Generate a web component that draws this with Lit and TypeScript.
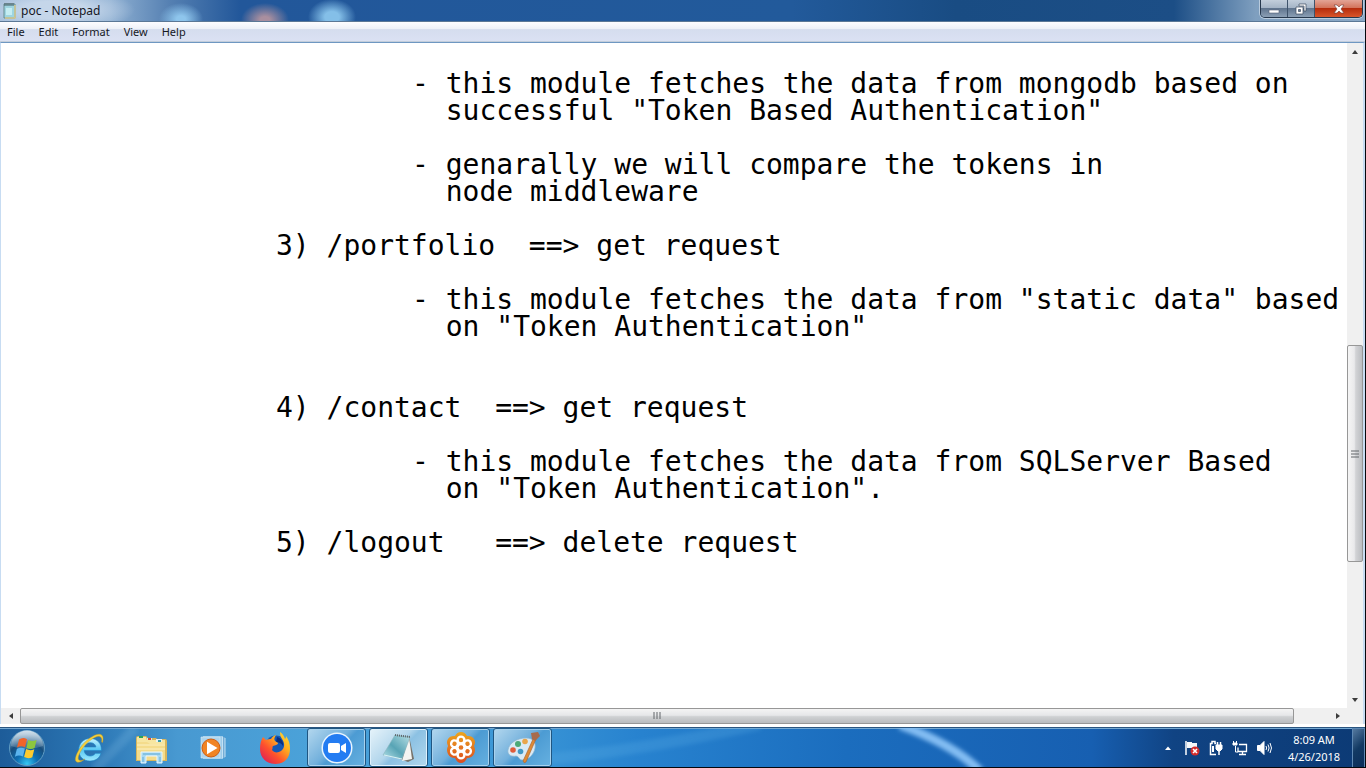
import { LitElement, html, svg, css } from "lit";
import { customElement, state } from "lit/decorators.js";

const DOCUMENT_TEXT = [
  "",
  "\t\t\t- this module fetches the data from mongodb based on",
  "\t\t\t  successful \"Token Based Authentication\"",
  "",
  "\t\t\t- genarally we will compare the tokens in",
  "\t\t\t  node middleware",
  "",
  "\t\t3) /portfolio  ==> get request",
  "",
  "\t\t\t- this module fetches the data from \"static data\" based",
  "\t\t\t  on \"Token Authentication\"",
  "",
  "",
  "\t\t4) /contact  ==> get request",
  "",
  "\t\t\t- this module fetches the data from SQLServer Based",
  "\t\t\t  on \"Token Authentication\".",
  "",
  "\t\t5) /logout   ==> delete request",
].join("\n");

const MENUS = ["File", "Edit", "Format", "View", "Help"];

const startOrb = html`<svg width="38" height="38" viewBox="0 0 38 38" aria-hidden="true">
  <defs>
    <radialGradient id="orb" cx=".5" cy=".95" r=".85">
      <stop offset="0" stop-color="#35c8f4"/><stop offset=".35" stop-color="#0d6fb4"/>
      <stop offset=".7" stop-color="#174d7c"/><stop offset="1" stop-color="#7fa3bf"/>
    </radialGradient>
    <linearGradient id="gloss" x1="0" y1="0" x2="0" y2="1">
      <stop offset="0" stop-color="#e4eef5" stop-opacity=".85"/><stop offset="1" stop-color="#8fb0c8" stop-opacity=".25"/>
    </linearGradient>
  </defs>
  <circle cx="19" cy="19" r="17.5" fill="url(#orb)" stroke="#5f9cc4" stroke-width="1"/>
  <path d="M3 17a16 15.500 0 0 1 32 0q-16 6-32 0z" fill="url(#gloss)"/>
  <path d="M11 10.500q4-3 8-.2l-2 8q-4-2-8 .2z" fill="#f0642a"/>
  <path d="M20.200 10.900q4 2 8.400 0l-2 8.200q-4 1.800-8.200-.2z" fill="#8cc63f"/>
  <path d="M8.900 19.700q4-2 8-.1l-2 8q-4-2-8 .1z" fill="#5bb4ee"/>
  <path d="M18.100 20.100q4 2.100 8.200.2l-2 8q-4 1.900-8.200-.2z" fill="#fccb2f"/>
</svg>`;

const ieIcon = html`<svg width="32" height="32" viewBox="0 0 32 32" aria-hidden="true">
  <defs><linearGradient id="ie" x1="0" y1="0" x2="0" y2="1">
    <stop offset="0" stop-color="#c6f4ff"/><stop offset=".5" stop-color="#57c7f4"/><stop offset="1" stop-color="#9ee9ff"/>
  </linearGradient></defs>
  <path d="M28.500 18.600H11.200c.3 3.300 2.600 5.400 5.800 5.400 2.500 0 4.300-1 5.300-2.700h5.700c-1.500 5-5.700 7.700-11 7.700C10.400 29 5.700 24.600 5.700 18S10.500 6.500 17.200 6.500c7 0 11.500 4.700 11.300 12.100zM11.400 15h11.500c-.4-2.700-2.600-4.300-5.600-4.300-3.100 0-5.300 1.700-5.900 4.300z" fill="url(#ie)" stroke="#1d82c3" stroke-width=".6"/>
  <path d="M29.500 10.500c1.300-4.300.6-7.500-2.300-8.200C22.300 1.200 12.500 7.800 7 16.200 2.500 22.900 1 28.600 3.800 30c1.900 1 5-.4 8.200-3-2.800 1.600-5 2-6 1.100-1.900-1.700-.1-6.600 4-12.300C15 9 23 3.500 26.600 4.400c2 .5 2.700 2.700 2 5.700z" fill="#f4cf3c" stroke="#c79a18" stroke-width=".4"/>
</svg>`;

const explorerIcon = html`<svg width="34" height="32" viewBox="0 0 34 32" aria-hidden="true">
  <path d="M2 6q0-2 2-2h8l2 2h8l1 1h8q2 0 2 2v20H2z" fill="#d8b65c"/>
  <path d="M3 5h9l1 3h18v20H3z" fill="#f7e6a1"/>
  <path d="M5 4h4v2H5z" fill="#2aa35b"/><path d="M13 6h5v2h-5z" fill="#d7e4ef"/><path d="M14 6h3v2h-3z" fill="#df4b2d"/>
  <path d="M22 7h6v3h-6z" fill="#e6f1f5"/><path d="M24 8h3v2h-3z" fill="#3a9ca8"/>
  <path d="M3 10h10l3 2h15v16H3z" fill="#f4dc8c"/><path d="M3 13h28M3 17h28" stroke="#fdf2c5"/>
  <path d="M7 31V20h21v11h-5v-7H12v7z" fill="#a7d8f1" stroke="#e8f8ff"/>
  <path d="M9 22h17M9 25v5M26 25v5" stroke="#65add5" stroke-width="1"/>
</svg>`;

const mediaIcon = html`<svg width="28" height="28" viewBox="0 0 28 28" aria-hidden="true">
  <path d="M6 3h20v21H6z" fill="#74acd5"/><path d="M4 2h20v23H4z" fill="#9ccbea"/>
  <path d="M2 3h19v21H2z" fill="#add4ed" stroke="#d6ecf8" stroke-width=".6"/><path d="M23.500 3v21M26 4v19" stroke="#c3e2f5"/>
  <circle cx="12" cy="14" r="9" fill="#f18423" stroke="#cf5e12"/>
  <path d="M8 7.700v12.600L18.500 14z" fill="#fff"/>
</svg>`;

const firefoxIcon = html`<svg width="32" height="34" viewBox="0 0 32 34" aria-hidden="true">
  <defs><linearGradient id="fox" x1="1" y1="0" x2=".1" y2="1">
    <stop offset="0" stop-color="#ffe43b"/><stop offset=".35" stop-color="#ffad1f"/>
    <stop offset=".65" stop-color="#ff512d"/><stop offset="1" stop-color="#d9195b"/>
  </linearGradient></defs>
  <circle cx="17" cy="15.500" r="11" fill="#1658b5"/>
  <path d="M18 6c4 1 7 5 6 9-2-3-4-4-7-4z" fill="#0b2f7d"/>
  <path d="M4 6c1 1 2 2 3 3 2-1 4-1 5-1 1-2 2-3 5-4-2 3-2 4-1 6l3 2c0 2-3 2-5 3-1 1 0 2-1 4 2 3 6 3 9 1 4-3 4-8 1-12-2-3-2-5-2-7 3 2 4 4 5 7 1-1 1-2 1-3 3 4 4 8 4 13 0 9-6 15-14.500 15S1 27 1 18c0-5 1-9 3-12z" fill="url(#fox)"/>
</svg>`;

const zoomIcon = html`<svg width="32" height="32" viewBox="0 0 32 32" aria-hidden="true">
  <circle cx="16" cy="16" r="15.500" fill="#e9f5ff"/><circle cx="16" cy="16" r="14" fill="#237cf2"/>
  <rect x="7" y="11" width="12" height="10" rx="2" fill="#fff"/><path d="M20 14l5-3v10l-5-3z" fill="#fff"/>
</svg>`;

const notepadLarge = html`<svg width="34" height="32" viewBox="0 0 34 32" aria-hidden="true">
  <defs><linearGradient id="pad" x1="0" y1="1" x2="1" y2="0">
    <stop offset="0" stop-color="#b4e1e9"/><stop offset=".45" stop-color="#58a4b5"/><stop offset="1" stop-color="#b7dfe5"/>
  </linearGradient></defs>
  <path d="M27 4l5 23-6 3-8-3z" fill="#77736b"/>
  <path d="M27 5l3 22-10 2z" fill="#f4f5f2"/>
  <path d="M13 3l15 2-8 22-19-4z" fill="url(#pad)" stroke="#8fb7bf" stroke-width=".6"/>
  <path d="M13 3l15 2" stroke="#5e6467" stroke-width="2" stroke-dasharray="1 1"/>
  <path d="M2 23l18 4" stroke="#d9f3f6"/>
</svg>`;

const petals = [0, 60, 120, 180, 240, 300];
const flowerIcon = html`<svg width="34" height="34" viewBox="0 0 34 34" aria-hidden="true">
  <defs><linearGradient id="daisy" gradientUnits="userSpaceOnUse" x1="0" y1="2" x2="0" y2="32">
    <stop offset="0" stop-color="#eba31d"/><stop offset="1" stop-color="#dc4b20"/>
  </linearGradient></defs>
  <path d="M17 1q4 0 6 4 5-.5 7 3 2 3 0 7 2 4 0 8-2 4-7 4-2 5-6 5t-6-5q-5 0-7-4-2-4 0-8-2-4 0-7 2-3.500 7-3 2-4 6-4z" fill="url(#daisy)"/>
  ${petals.map((a) => svg`<circle cx="17" cy="9" r="3.400" fill="none" stroke="#fff" stroke-width="2.400" transform="rotate(${a} 17 16.500)"/>`)}
  <circle cx="17" cy="16.500" r="4.500" fill="#fff"/><circle cx="17" cy="16.500" r="2.300" fill="#e47622"/>
</svg>`;

const paintIcon = html`<svg width="34" height="34" viewBox="0 0 34 34" aria-hidden="true">
  <path d="M2 19C3 12 11 7 20 7c7 0 10 4 9 10-1 7-7 12-13 12-3 0-3-4-6-4-4 1-9-1-8-6z" fill="#d9eaf5" stroke="#8fb6d0" stroke-width=".7"/>
  <circle cx="12" cy="13" r="3" fill="#4ca977"/><circle cx="19" cy="10.500" r="2.800" fill="#e9a64b"/>
  <circle cx="7" cy="19" r="2.800" fill="#df5c3c"/><circle cx="14.500" cy="20.500" r="2.800" fill="#4298c5"/>
  <path d="M28 6l2 2-10 23q-2 2-3-1z" fill="#de8a35" stroke="#a8602b" stroke-width=".6"/>
  <path d="M25 2l7-1 2 4-5 5-3-2z" fill="#a86b4c"/>
</svg>`;

const TASKS = [
  { label: "Internet Explorer", icon: ieIcon, open: false, active: false },
  { label: "Windows Explorer", icon: explorerIcon, open: false, active: false },
  { label: "Media Player", icon: mediaIcon, open: false, active: false },
  { label: "Firefox", icon: firefoxIcon, open: false, active: false },
  { label: "Zoom", icon: zoomIcon, open: true, active: false },
  { label: "Notepad", icon: notepadLarge, open: true, active: true },
  { label: "GoToWebinar", icon: flowerIcon, open: true, active: false },
  { label: "Paint", icon: paintIcon, open: true, active: false },
];

const TRAY = [
  { label: "Show hidden icons", icon: html`<svg width="16" height="16" viewBox="0 0 16 16"><path d="M5 10l3-3.500 3 3.500z" fill="#fff"/></svg>` },
  { label: "Action Center", icon: html`<svg width="16" height="16" viewBox="0 0 16 16"><path d="M2 1v14" stroke="#fff" stroke-width="1.500"/><path d="M3 2h5v1h5v6H8V8H3z" fill="#f4f7fa"/><circle cx="11" cy="11" r="4.500" fill="#d32c2c"/><path d="M9 9l4 4M13 9l-4 4" stroke="#fff" stroke-width="1.600"/></svg>` },
  { label: "Power", icon: html`<svg width="16" height="16" viewBox="0 0 16 16" fill="none" stroke="#fff"><path d="M8 14.500H2.500v-11H4v-2h3v2h1" stroke-width="1.500"/><path d="M5 6v6" stroke-width="2"/><path d="M9.500 2v3M12.500 2v3" stroke-width="1.500"/><path d="M8 5h6v4l-2 2h-2L8 9z" fill="#fff"/><path d="M11 11v4" stroke-width="1.500"/></svg>` },
  { label: "Network", icon: html`<svg width="16" height="16" viewBox="0 0 16 16" fill="none" stroke="#fff"><path d="M1.500 1v2M4.500 1v2"/><path d="M1 3h4v2H1z" fill="#fff"/><path d="M3.500 6v6H6"/><path d="M7 4.500h7.500v7H6v-4" stroke-width="1.300"/><path d="M10.500 12v2M7 14.500h7" stroke-width="1.300"/></svg>` },
  { label: "Volume", icon: html`<svg width="16" height="16" viewBox="0 0 16 16" fill="none" stroke="#fff"><path d="M1.500 5.500H4l4-4v13l-4-4H1.500z" fill="#fff"/><path d="M10 6q1.200 2 0 4M12 4.500q2.200 3.500 0 7M14 3q3 5 0 10"/></svg>` },
];

const arrow = (d: string) => html`<svg width="8" height="8" viewBox="0 0 8 8" aria-hidden="true"><path d=${d} fill="#3c3c3c"/></svg>`;

@customElement("app-root")
export class AppRoot extends LitElement {
  @state() private text = DOCUMENT_TEXT;

  static styles = css`
    :host {
      display: flex;
      flex-direction: column;
      height: 100vh;
      box-sizing: border-box;
      border-right: 1px solid #05070c;
      border-bottom: 1px solid #05070c;
      overflow: hidden;
      font-family: "Noto Sans", "Open Sans", sans-serif;
      font-size: 11px;
      color: #15181f;
    }
    button {
      display: flex;
      align-items: center;
      justify-content: center;
      padding: 0;
      border: 0;
      background: none;
      font: inherit;
      color: inherit;
    }
    svg { display: block; flex: none; }
    .window {
      flex: 1;
      min-height: 0;
      display: flex;
      flex-direction: column;
    }
    .title {
      height: 21px;
      flex: none;
      display: flex;
      align-items: flex-start;
      padding: 0 2px;
      border-bottom: 1px solid #5b7896;
      background:
        radial-gradient(ellipse 22px 16px at 181px 19px, #8ec5ec 20%, transparent),
        radial-gradient(ellipse 24px 17px at 265px 20px, #a98f9f 20%, transparent),
        radial-gradient(ellipse 24px 18px at 332px 17px, #84bfe8 30%, transparent),
        radial-gradient(ellipse 80px 22px at 55px 10px, #c5d6ea 40%, transparent),
        linear-gradient(90deg, #9db8d6 0, #8fb0d2 110px, #5580b2 170px, #22579a 240px, #225a9b 58%, #194c83 70%, #1c4e86 86%, #7f9fbf 92%, #8ba9c7 100%);
    }
    .caption {
      display: flex;
      align-items: center;
      gap: 4px;
      height: 21px;
      flex: 1;
      margin: 0;
      font-size: 12px;
      font-weight: 400;
    }
    .controls {
      display: flex;
      height: 17px;
      border: 1px solid #26384d;
      border-top: 0;
      border-radius: 0 0 5px 5px;
      overflow: hidden;
      box-shadow: 0 0 0 1px #b9cbdd;
    }
    .control {
      width: 27px;
      height: 17px;
      border-right: 1px solid #3e536b;
      background: linear-gradient(#c2cedb 0, #a3b3c5 48%, #60758e 50%, #8b9fb5 100%);
    }
    .close {
      width: 47px;
      border-right: 0;
      background: linear-gradient(#e3a495 0, #d27158 48%, #b62d0d 50%, #d9552a 100%);
    }
    .menu {
      height: 19px;
      flex: none;
      display: flex;
      align-items: center;
      gap: 14px;
      padding: 0 7px;
      border-bottom: 1px solid #c3cedb;
      background: linear-gradient(#fdfdff 0, #edf1f8 35%, #d5ddee 40%, #dbe1f3 100%);
    }
    .body {
      flex: 1;
      min-height: 0;
      display: grid;
      grid-template-columns: minmax(0, 1fr) 16px;
      grid-template-rows: minmax(0, 1fr) 16px;
      margin-bottom: 3px;
      border: solid #c7dcf2;
      border-width: 0 2px 0 1px;
      border-top: 1px solid #6e97c2;
    }
    .editor {
      display: block;
      box-sizing: border-box;
      width: 100%;
      height: 100%;
      margin: 0;
      padding: 0 0 0 3px;
      border: 0;
      outline: 0;
      resize: none;
      overflow: hidden;
      white-space: pre;
      tab-size: 136px;
      font: 28px/27px "DejaVu Sans Mono", monospace;
      color: #000;
      background: #fff;
    }
    .track { display: flex; background: #f0f0f0; }
    .vertical { flex-direction: column; }
    .arrow { width: 19px; height: 17px; flex: none; }
    .vertical .arrow { width: 16px; }
    .track:not(.vertical) .arrow { height: 16px; }
    .thumb {
      display: flex;
      align-items: center;
      justify-content: center;
      box-sizing: border-box;
      border: 1px solid #979797;
      border-radius: 2px;
      background: linear-gradient(#f4f4f4 0, #e6e7e9 45%, #cfd1d3 55%, #b9bcbf 100%);
    }
    .vertical .thumb { background: linear-gradient(90deg, #f5f5f5 0, #e9e9eb 45%, #d2d3d6 55%, #bbbdc1 100%); }
    .v-before { flex: 286; }
    .v-thumb { flex: 216; }
    .v-after { flex: 129; }
    .h-thumb { flex: 1274; }
    .h-after { flex: 34; }
    .corner { background: #f0f0f0; }
    .taskbar {
      height: 40px;
      flex: none;
      box-sizing: border-box;
      position: relative;
      display: flex;
      align-items: stretch;
      gap: 3px;
      border-top: 1px solid #2a5580;
      background: linear-gradient(90deg, #1d5c99 0, #2c77b5 7%, #4899d1 13%, #4ba3da 24%, #3a96d6 38%, #2782cf 47%, #1b6dbe 62%, #175fb1 80%, #104383 86%, #0c3a75 100%);
      box-shadow: inset 0 1px #75a9d3;
    }
    .streaks {
      position: absolute;
      inset: 0;
      width: 100%;
      height: 100%;
    }
    .start, .task, .tray { position: relative; }
    .start { width: 56px; padding-right: 3px; }
    .task { width: 59px; box-sizing: border-box; }
    .open {
      border: 1px solid #1f5682;
      border-radius: 3px;
      background: linear-gradient(135deg, #b3d7ee 0, #72b0dc 45%, #4c9bd3 55%, #66b0e0 100%);
      box-shadow: inset 0 0 0 1px #a8d2ee;
    }
    .active {
      background: linear-gradient(135deg, #e6f3fa 0, #b2d6ec 45%, #8cc1e3 55%, #b2d8ee 100%);
      box-shadow: inset 0 0 0 1px #dff1fc;
    }
    .tray {
      margin-left: auto;
      display: flex;
      align-items: center;
      gap: 8px;
      color: #fff;
    }
    .clock {
      width: 68px;
      height: 38px;
      flex-direction: column;
      line-height: 17px;
    }
    .desktop {
      width: 13px;
      align-self: stretch;
      margin-left: -4px;
      border: 1px solid #5e88b3;
      border-bottom: 0;
      background: linear-gradient(135deg, #55799f, #123963 50%, #0b2d5a);
    }
  `;

  render() {
    return html`
      <main class="window">
        <header class="title">
          <h1 class="caption">
            <svg width="15" height="17" viewBox="0 0 15 17" aria-hidden="true">
              <path d="M2 2h11v14H2z" fill="#9ed5e1" stroke="#668c91"/><path d="M13 3v13H3" stroke="#d5c98e" fill="none" stroke-width="1.500"/>
              <path d="M3 1v3M5 1v3M7 1v3M9 1v3M11 1v3" stroke="#485c62"/><path d="M4 6h6v7H4z" fill="#c5edf2"/>
            </svg>
            poc - Notepad
          </h1>
          <div class="controls">
            <button class="control" aria-label="Minimize"><svg width="12" height="12" viewBox="0 0 12 12"><path d="M1 7h10v3H1z" fill="#fff" stroke="#506075" stroke-width=".6"/></svg></button>
            <button class="control" aria-label="Restore"><svg width="12" height="12" viewBox="0 0 12 12"><path d="M4 1h7v7H9V3H4z" fill="#fff" stroke="#3e4c60" stroke-width=".7"/><path d="M1 4h7v7H1zM3.500 6.500v2h2v-2z" fill="#fff" fill-rule="evenodd" stroke="#3e4c60" stroke-width=".7"/></svg></button>
            <button class="control close" aria-label="Close"><svg width="12" height="12" viewBox="0 0 12 12"><path d="M1 2h3l2 2 2-2h3L8 6l3 4H8L6 8l-2 2H1l3-4z" fill="#fff" stroke="#6b3a38" stroke-width=".6"/></svg></button>
          </div>
        </header>
        <nav class="menu" aria-label="Menu">${MENUS.map((m) => html`<button>${m}</button>`)}</nav>
        <section class="body">
          <textarea class="editor" aria-label="Document" spellcheck="false" wrap="off" .value=${this.text}
            @input=${(e: Event) => (this.text = (e.target as HTMLTextAreaElement).value)}></textarea>
          <div class="track vertical">
            <button class="arrow" aria-label="Scroll up">${arrow("M1 6l3-4 3 4z")}</button>
            <div class="v-before"></div>
            <div class="thumb v-thumb"><svg width="8" height="8" viewBox="0 0 8 8"><path d="M0 1h8M0 4h8M0 7h8" stroke="#62666b"/></svg></div>
            <div class="v-after"></div>
            <button class="arrow" aria-label="Scroll down">${arrow("M1 2l3 4 3-4z")}</button>
          </div>
          <div class="track">
            <button class="arrow" aria-label="Scroll left">${arrow("M6 1L2 4l4 3z")}</button>
            <div class="thumb h-thumb"><svg width="8" height="8" viewBox="0 0 8 8"><path d="M1 0v7M4 0v7M7 0v7" stroke="#62666b"/></svg></div>
            <div class="h-after"></div>
            <button class="arrow" aria-label="Scroll right">${arrow("M2 1l4 3-4 3z")}</button>
          </div>
          <div class="corner"></div>
        </section>
      </main>
      <footer class="taskbar">
        <svg class="streaks" viewBox="0 0 1365 40" preserveAspectRatio="none" aria-hidden="true">
          <defs><filter id="soft"><feGaussianBlur stdDeviation="2"/></filter></defs>
          <path d="M900-3Q952 16 980 44" fill="none" stroke="#83bdf3" stroke-width="9" filter="url(#soft)"/>
          <path d="M500 36Q620 28 760-4" fill="none" stroke="#5fb0e6" stroke-width="12" opacity=".25" filter="url(#soft)"/>
          <path d="M95 42L135 0" stroke="#8cc4e8" stroke-width="10" opacity=".2" filter="url(#soft)"/>
        </svg>
        <button class="start" aria-label="Start">${startOrb}</button>
        ${TASKS.map((t) => html`<button class="task ${t.open ? "open" : ""} ${t.active ? "active" : ""}" aria-label=${t.label}>${t.icon}</button>`)}
        <div class="tray">
          ${TRAY.map((t) => html`<button aria-label=${t.label}>${t.icon}</button>`)}
          <button class="clock"><span>8:09 AM</span><span>4/26/2018</span></button>
          <button class="desktop" aria-label="Show desktop"></button>
        </div>
      </footer>
    `;
  }
}
